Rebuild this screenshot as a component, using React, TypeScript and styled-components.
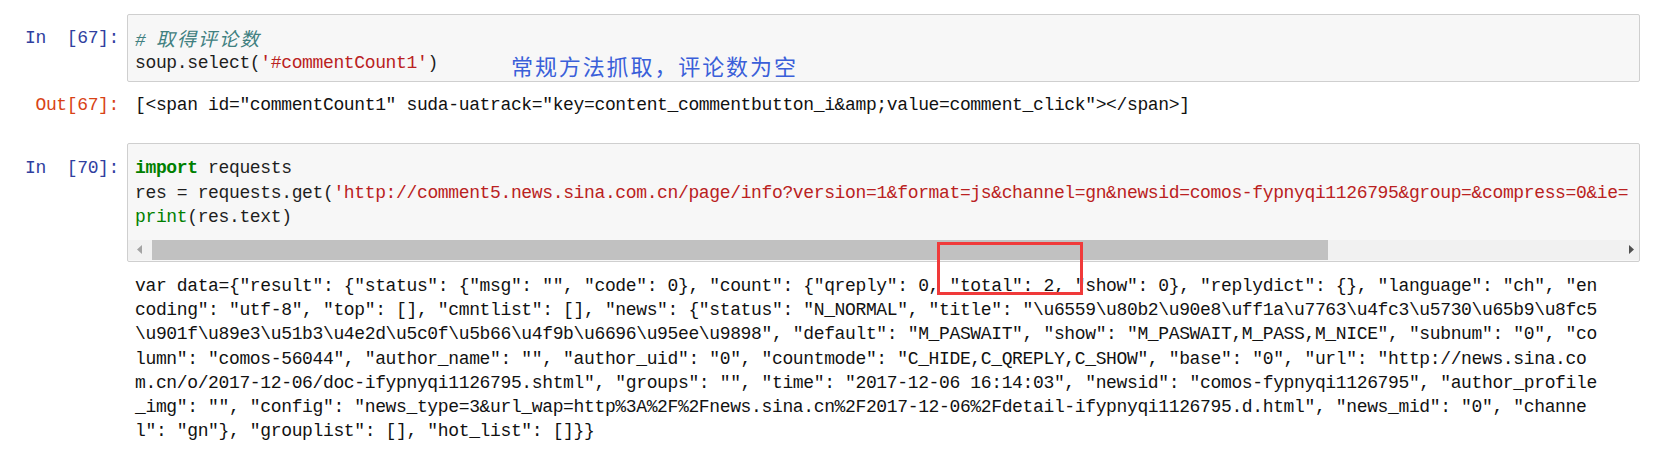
import React from "react";
import styled, { createGlobalStyle } from "styled-components";

const Global = createGlobalStyle`
  html, body { margin: 0; padding: 0; background: #ffffff; }
  body { font-family: "Liberation Mono", "Noto Sans CJK SC", monospace; }
`;

const MONO = `"Liberation Mono", "Noto Sans CJK SC", monospace`;

const Page = styled.div`
  padding: 14px 19px 0 0;
  display: flex;
  flex-direction: column;
  width: 1659px;
  box-sizing: border-box;
`;

const Row = styled.div<{ $mt?: number }>`
  display: flex;
  align-items: flex-start;
  margin-top: ${(p) => p.$mt ?? 0}px;
`;

const Prompt = styled.div<{ $out?: boolean; $pt?: number }>`
  width: 119px;
  flex: 0 0 119px;
  margin-right: 8px;
  text-align: right;
  white-space: pre;
  font-family: ${MONO};
  font-size: 18px;
  letter-spacing: -0.36px;
  line-height: 24.2px;
  padding-top: ${(p) => p.$pt ?? 0}px;
  color: ${(p) => (p.$out ? "#D84315" : "#303F9F")};
`;

const InputBox = styled.div`
  position: relative;
  flex: 1;
  min-width: 0;
  background: #f7f7f7;
  border: 1px solid #cfcfcf;
  border-radius: 2px;
  overflow: hidden;
`;

const Code = styled.div<{ $pt?: number; $pb?: number }>`
  padding: ${(p) => p.$pt ?? 10}px 7px ${(p) => p.$pb ?? 7}px 7px;
  font-family: ${MONO};
  font-size: 18px;
  letter-spacing: -0.36px;
  line-height: 24.2px;
  color: #1e1e1e;
  white-space: pre;
  overflow: hidden;
`;

const Line = styled.div<{ $h?: number }>`
  height: ${(p) => p.$h ?? 24.2}px;
`;

const Kw = styled.span`
  color: #008000;
  font-weight: bold;
`;
const Builtin = styled.span`
  color: #008000;
`;
const Str = styled.span`
  color: #ba2121;
`;
const Comment = styled.span`
  color: #408080;
  font-style: italic;
`;
const CjkComment = styled.span`
  font-family: "Noto Sans CJK SC", sans-serif;
  font-size: 19px;
  letter-spacing: 2px;
`;

const Annotation = styled.div`
  position: absolute;
  left: 383px;
  top: 36px;
  font-family: "Noto Sans CJK SC", sans-serif;
  font-size: 22px;
  letter-spacing: 1.9px;
  line-height: 28px;
  color: #3a5fd9;
  white-space: nowrap;
`;

const Output = styled.div`
  flex: 1;
  min-width: 0;
  padding-left: 8px;
  font-family: ${MONO};
  font-size: 18px;
  letter-spacing: -0.36px;
  line-height: 24.2px;
  color: #111;
  white-space: pre;
  overflow: hidden;
`;

const ScrollBar = styled.div`
  display: flex;
  align-items: stretch;
  height: 20px;
  background: #f1f1f1;
  margin: 0 0 1px 0;
`;

const ArrowBtn = styled.div<{ $w: number }>`
  width: ${(p) => p.$w}px;
  flex: 0 0 ${(p) => p.$w}px;
  display: flex;
  align-items: center;
  justify-content: center;
`;

const Track = styled.div`
  flex: 1;
  display: flex;
`;

const Thumb = styled.div`
  background: #c1c1c1;
  height: 100%;
`;

const Highlight = styled.div`
  position: absolute;
  left: 937px;
  top: 242px;
  width: 140px;
  height: 47px;
  border: 3px solid #f03a3a;
  pointer-events: none;
`;

const Wrapper = styled.div`
  position: relative;
`;

const outLines = [
  `var data={"result": {"status": {"msg": "", "code": 0}, "count": {"qreply": 0, "total": 2, "show": 0}, "replydict": {}, "language": "ch", "en`,
  `coding": "utf-8", "top": [], "cmntlist": [], "news": {"status": "N_NORMAL", "title": "\\u6559\\u80b2\\u90e8\\uff1a\\u7763\\u4fc3\\u5730\\u65b9\\u8fc5`,
  `\\u901f\\u89e3\\u51b3\\u4e2d\\u5c0f\\u5b66\\u4f9b\\u6696\\u95ee\\u9898", "default": "M_PASWAIT", "show": "M_PASWAIT,M_PASS,M_NICE", "subnum": "0", "co`,
  `lumn": "comos-56044", "author_name": "", "author_uid": "0", "countmode": "C_HIDE,C_QREPLY,C_SHOW", "base": "0", "url": "http://news.sina.co`,
  `m.cn/o/2017-12-06/doc-ifypnyqi1126795.shtml", "groups": "", "time": "2017-12-06 16:14:03", "newsid": "comos-fypnyqi1126795", "author_profile`,
  `_img": "", "config": "news_type=3&url_wap=http%3A%2F%2Fnews.sina.cn%2F2017-12-06%2Fdetail-ifypnyqi1126795.d.html", "news_mid": "0", "channe`,
  `l": "gn"}, "grouplist": [], "hot_list": []}}`,
];

const url =
  "'http://comment5.news.sina.com.cn/page/info?version=1&format=js&channel=gn&newsid=comos-fypnyqi1126795&group=&compress=0&ie=";

export default function App() {
  return (
    <Wrapper>
      <Global />
      <Page>
        <Row>
          <Prompt $pt={12}>{"In  [67]:"}</Prompt>
          <InputBox>
            <Code $pt={11} $pb={6}>
              <Line $h={25}>
                <Comment>
                  # <CjkComment>取得评论数</CjkComment>
                </Comment>
              </Line>
              <Line>
                soup.select(<Str>'#commentCount1'</Str>)
              </Line>
            </Code>
            <Annotation>常规方法抓取，评论数为空</Annotation>
          </InputBox>
        </Row>
        <Row $mt={11}>
          <Prompt $out>{"Out[67]:"}</Prompt>
          <Output>
            {`[<span id="commentCount1" suda-uatrack="key=content_commentbutton_i&amp;value=comment_click"></span>]`}
          </Output>
        </Row>
        <Row $mt={26}>
          <Prompt $pt={13}>{"In  [70]:"}</Prompt>
          <InputBox>
            <Code $pt={12} $pb={11}>
              <Line>
                <Kw>import</Kw> requests
              </Line>
              <Line>
                res = requests.get(<Str>{url}</Str>
              </Line>
              <Line>
                <Builtin>print</Builtin>(res.text)
              </Line>
            </Code>
            <ScrollBar>
              <ArrowBtn $w={24}>
                <svg width="6" height="9" viewBox="0 0 6 9">
                  <path d="M5 0 L0 4.5 L5 9 Z" fill="#a3a3a3" />
                </svg>
              </ArrowBtn>
              <Track>
                <Thumb style={{ width: "1176px" }} />
              </Track>
              <ArrowBtn $w={17}>
                <svg width="6" height="9" viewBox="0 0 6 9">
                  <path d="M1 0 L6 4.5 L1 9 Z" fill="#505050" />
                </svg>
              </ArrowBtn>
            </ScrollBar>
          </InputBox>
        </Row>
        <Row $mt={12}>
          <Prompt />
          <Output>
            {outLines.map((l, i) => (
              <Line key={i}>{l}</Line>
            ))}
          </Output>
        </Row>
      </Page>
      <Highlight />
    </Wrapper>
  );
}
